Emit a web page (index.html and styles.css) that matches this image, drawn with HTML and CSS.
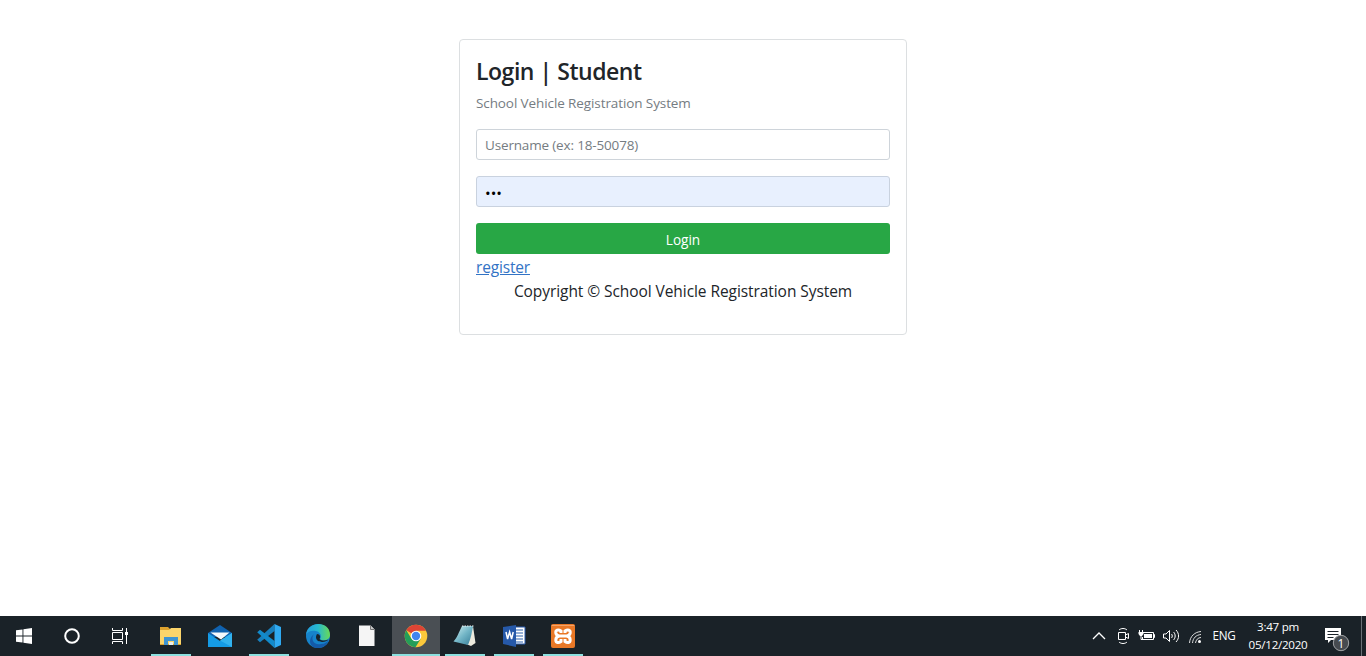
FILE: index.html
```html
<!DOCTYPE html>
<html lang="en">
<head>
<meta charset="utf-8">
<title>Login | Student</title>
<link rel="stylesheet" href="styles.css">
</head>
<body>
<main class="page">
  <form class="card">
    <h1 class="title">Login | Student</h1>
    <p class="subtitle">School Vehicle Registration System</p>
    <input class="field" type="text" placeholder="Username (ex: 18-50078)">
    <input class="field filled" type="password" value="123">
    <button class="login" type="button">Login</button>
    <a class="register" href="#">register</a>
    <p class="copyright">Copyright © School Vehicle Registration System</p>
  </form>
</main>
<footer class="taskbar">
  <div class="system">
    <div class="slot"><svg width="16" height="16" viewBox="0 0 16 16" fill="#fff"><path d="M0 2.3 6.5 1.4V7.5H0zM7.4 1.2 16 0v7.5H7.4zM0 8.4h6.5v6.2L0 13.7zM7.4 8.4H16V16l-8.6-1.2z"/></svg></div>
    <div class="slot"><svg width="18" height="18" viewBox="0 0 18 18" fill="none" stroke="#fff" stroke-width="2"><circle cx="9" cy="9" r="6.8"/></svg></div>
    <div class="slot"><svg width="18" height="18" viewBox="0 0 18 18" fill="none" stroke="#fff"><path d="M1.500 1v2.500h10V1M1.500 17v-2.500h10V17M1.500 5.500h10v7h-10zM15.500 1v16"/><path d="M14 5h3v3h-3z" fill="#fff" stroke="none"/></svg></div>
  </div>
  <div class="apps">
    <div class="slot running"><svg width="24" height="24" viewBox="0 0 24 24"><path d="M1 3h8l2 2h11v16H1z" fill="#dca22e"/><path d="M1 6h9l2-2h10v16H1z" fill="#fbd56b"/><path d="M5 21v-8h14v8h-4v-4H9v4z" fill="#3e94d2"/><path d="M10 21v-3h4v3z" fill="#e9eef0"/></svg></div>
    <div class="slot"><svg width="24" height="24" viewBox="0 0 24 24"><path d="M0 9 12 1l12 8v4H0z" fill="#1062af"/><path d="M0 9l12 8 12-8v14H0z" fill="#159be5"/><path d="M12 16.500 24 9v14z" fill="#32b2ee"/><path d="M2.500 8.500h19L13 15.500z" fill="#f5f9fc"/></svg></div>
    <div class="slot running"><svg width="24" height="24" viewBox="0 0 24 24"><path d="M17.500 0v7L3 18.300.2 15.800z" fill="#187fbd"/><path d="M17.500 24v-7L3 5.700.2 8.200z" fill="#128acb"/><path d="M17.500 0 24 3v18l-6.500 3z" fill="#2faaf2"/></svg></div>
    <div class="slot"><svg width="24" height="24" viewBox="0 0 24 24"><defs><linearGradient id="edge-top" x1="0" x2="1"><stop stop-color="#249dde"/><stop offset=".5" stop-color="#27b9cd"/><stop offset="1" stop-color="#69da55"/></linearGradient></defs><circle cx="12" cy="12" r="12" fill="#1683cb"/><path d="M0 11C1-3 24-4 24 11c0 5-7 7-10 4 2-2 1-7-4-8C5 6 1 8 0 11z" fill="url(#edge-top)"/><path d="M8 10c-4 5 0 12 7 10 4 0 6-2 8-4-2 5-6 8-11 8C4 24 1 16 8 10z" fill="#145aa9"/><path d="M11 10c3 0 4 3 2.500 5 2 2 6 2 9 .5-2 3-12 4-12.500-2 0-1.500.5-2.500 1-3.500z" fill="#17232b"/></svg></div>
    <div class="slot"><svg width="24" height="24" viewBox="0 0 24 24"><path d="M4 1.500h11.500l4 4V22H4z" fill="#f5f5f5"/><path d="M15.500 1.500v4h4" fill="#ccc" stroke="#777"/></svg></div>
    <div class="slot running active"><svg width="24" height="24" viewBox="0 0 24 24"><circle cx="12" cy="12" r="11.300" fill="#fbc83b"/><path d="M12 12 2.300 6.300A11.300 11.300 0 0 1 22 6.800H12z" fill="#dd4435"/><path d="M2.300 6.300A11.300 11.300 0 0 0 11.500 23.300L16.700 14.700 7.300 14.500z" fill="#249e59"/><circle cx="12" cy="12" r="5.300" fill="#fff"/><circle cx="12" cy="12" r="4.200" fill="#4285ef"/></svg></div>
    <div class="slot running"><svg width="24" height="24" viewBox="0 0 24 24"><defs><linearGradient id="note" x2="1" y2="1"><stop stop-color="#d3f1f2"/><stop offset=".5" stop-color="#73b6c7"/><stop offset="1" stop-color="#347b96"/></linearGradient></defs><path d="m20 2 2.500 17-4.500 3-5-2z" fill="#eceadd"/><path d="M9 2h11c-1 6-2 12-5 19L.5 17.500C4 14 6 8 9 2z" fill="url(#note)"/><path d="M9 2h12" stroke="#eee" stroke-dasharray="1.500 1"/></svg></div>
    <div class="slot running"><svg width="24" height="24" viewBox="0 0 24 24"><path d="M11 3h12v17H11z" fill="#fff" stroke="#285aac"/><path d="M13 6h8M13 9h8M13 12h8M13 15h8M13 18h8" stroke="#2c62ad" stroke-width="1.200"/><path d="M1 3l13-2v22L1 20z" fill="#2659a9"/><path d="m4 8 1.600 7 2-7 2 7L11.200 8" fill="none" stroke="#fff" stroke-width="1.500"/></svg></div>
    <div class="slot running"><svg width="24" height="24" viewBox="0 0 24 24"><rect width="24" height="24" rx="2" fill="#e97826"/><path d="M.7 1.500h22.600" stroke="#f5a367"/><path d="M10 9V7C7 5 4.500 6 4.800 9c.4 2 2 2.800 3.700 3-2 .3-3.700 1.500-3.700 4 0 3 3 3 5.200 1.500V15M14 9V7c3-2 5.500-1 5.200 2-.4 2-2 2.800-3.700 3 2 .3 3.700 1.500 3.700 4 0 3-3 3-5.200 1.500V15M8.500 12h7" fill="none" stroke="#fff" stroke-width="3"/></svg></div>
  </div>
  <div class="tray">
    <svg width="24" height="20" viewBox="0 0 24 20" fill="none" stroke="#fff" stroke-width="1.300"><path d="m6 13 6-6 6 6"/></svg>
    <svg width="24" height="20" viewBox="0 0 24 20" fill="none" stroke="#fff"><path d="M7.500 6.500h7v7h-7zM14.500 9l3-1.500v5l-3-1.500M8 4c2-2 6-2 8 0M8 16c2 2 6 2 8 0"/></svg>
    <svg width="24" height="20" viewBox="0 0 24 20" fill="none" stroke="#fff"><path d="M8 6.500h10.500v7h-11V11M18.500 8.500h1v3h-1M4.500 4v2M7.500 4v2M6 9.500v4h2"/><path d="M3.500 6h5v2L7 10H5L3.500 8zM9 8h8v4H9z" fill="#fff" stroke="none"/></svg>
    <svg width="24" height="20" viewBox="0 0 24 20" fill="none" stroke="#fff"><path d="M4.500 8h2.500l3.500-3.500v11L7 12H4.500zM12.500 8c1 1 1 3 0 4M14.500 6c2.200 2 2.200 6 0 8M17 4c3.400 3.500 3.400 8.500 0 12"/></svg>
    <svg width="24" height="20" viewBox="0 0 24 20" fill="none" stroke="#ddd"><path d="M6.500 17C7 10 12 6 18 5.500M9.500 17C10 12 13 9 18 8.500M12.500 17c.4-3 2.500-5.500 5.500-5.500"/><circle cx="16.500" cy="15.500" r="1.500" fill="#fff" stroke="none"/></svg>
    <span class="language">ENG</span>
    <div class="clock"><span>3:47 pm</span><span>05/12/2020</span></div>
    <div class="notifications"><svg width="26" height="26" viewBox="0 0 26 26"><path d="M1 1h16v12H7l-3 3v-3H1z" fill="#fff"/><path d="M3.500 4.500h11M3.500 7.500h11M3.500 10.500h6" stroke="#1b2329"/><circle cx="17" cy="16" r="7.700" fill="#464b50" stroke="#a1a4a6"/></svg><span class="count">1</span></div>
  </div>
</footer>
</body>
</html>
```
FILE: styles.css
```css
* { box-sizing: border-box; }
body { margin: 0; height: 656px; display: flex; flex-direction: column; overflow: hidden; background: #fff; color: #212529; font-family: "Open Sans", "Noto Sans", sans-serif; }
.page { flex: 1; padding-top: 39px; }
.card { width: 448px; height: 296px; margin: 0 auto; padding: 16px; border: 1px solid #dcdfe1; border-radius: 4px; display: flex; flex-direction: column; }
.title { margin: 0; height: 32px; font-size: 23px; line-height: 30px; font-weight: 600; letter-spacing: -.46px; white-space: nowrap; }
.subtitle { margin: 4px 0 15px; height: 22px; line-height: 22px; font-size: 13.5px; letter-spacing: -.1px; color: #757c82; white-space: nowrap; }
.field { display: block; width: 414px; height: 31px; margin: 0 0 16px; padding: 4px 8px; border: 1px solid #ced4da; border-radius: 3px; font: 13.5px "Open Sans", sans-serif; letter-spacing: -.16px; outline: none; }
.field::placeholder { color: #757c82; opacity: 1; }
.filled { padding: 5px 8px 3px; background: #e8f0fe; color: #000; border-color: #c9d2df; font-size: 15px; letter-spacing: 0; }
.login { height: 31px; flex: none; padding: 1px 0 0; border: 0; border-radius: 3px; background: #28a745; color: #fff; font: 13.6px "Open Sans", sans-serif; }
.register { align-self: flex-start; height: 24px; line-height: 26px; font-size: 15.5px; color: #3273c5; letter-spacing: -.17px; }
.copyright { margin: 0; line-height: 26px; font-size: 15.5px; letter-spacing: -.07px; text-align: center; white-space: nowrap; }
.taskbar { height: 40px; flex: none; display: flex; background: #1a2228; color: #fff; }
.system { display: flex; }
.slot { width: 48px; height: 40px; display: flex; align-items: center; justify-content: center; }
.apps { display: flex; gap: 1px; margin-left: 3px; }
.running { background: linear-gradient(#8ce0df, #8ce0df) center bottom / 40px 2px no-repeat; }
.active { background-color: #4a4f54; background-size: 48px 2px; }
.tray { margin-left: auto; display: flex; align-items: center; }
.language { width: 30px; margin-left: 2px; padding-bottom: 2px; font-size: 11.7px; text-align: center; letter-spacing: -.2px; }
.clock { width: 78px; display: flex; flex-direction: column; align-items: center; line-height: 18px; font-size: 11.6px; letter-spacing: -.27px; }
.notifications { width: 45px; height: 40px; padding: 11px 0 0 7px; margin-right: 4px; border-right: 1px solid #697177; position: relative; }
.count { position: absolute; left: 20px; top: 20px; width: 8px; line-height: 16px; font-size: 12px; text-align: center; }
```
